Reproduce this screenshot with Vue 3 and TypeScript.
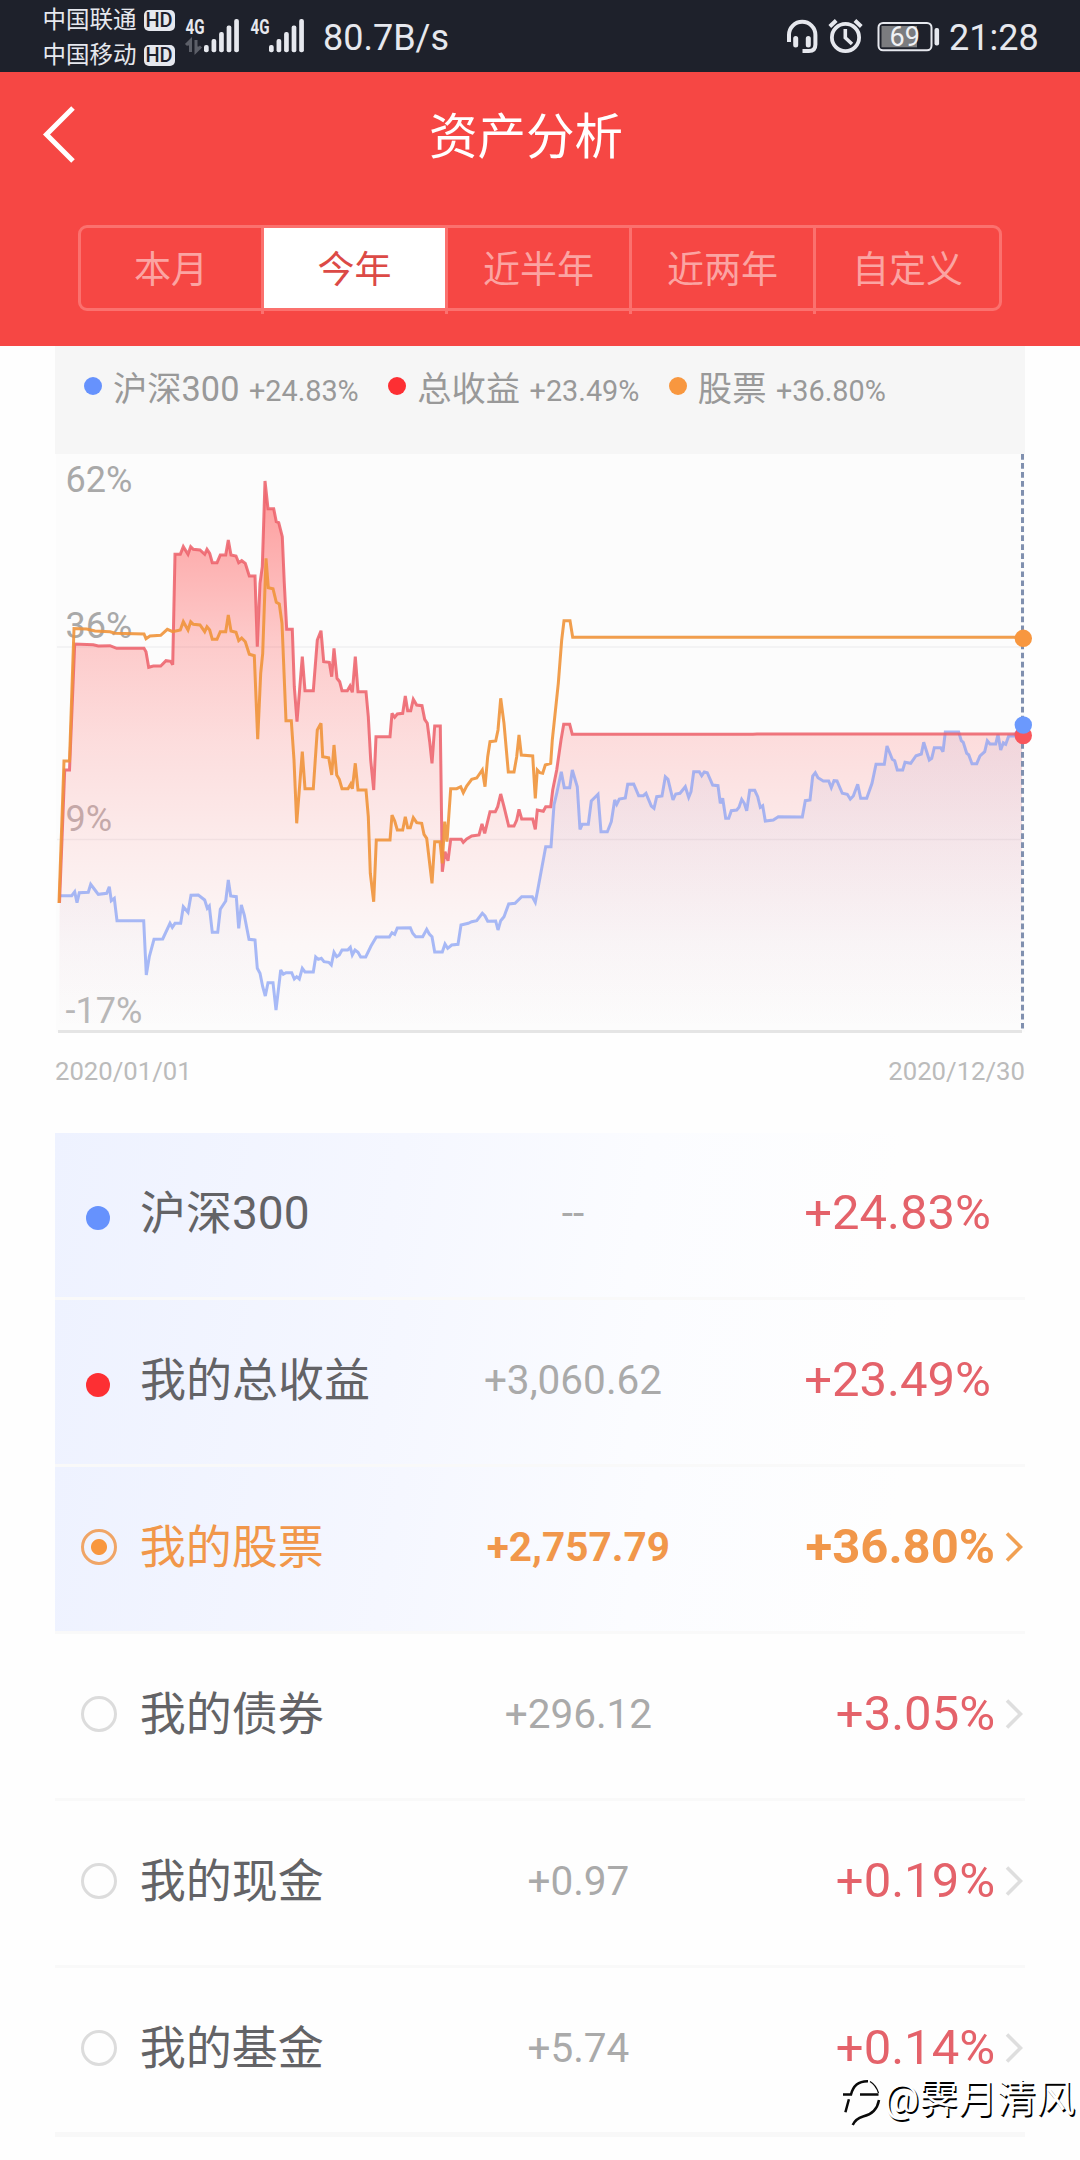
<script setup lang="ts">
interface Tab { label: string; active?: boolean }
interface LegendItem { name: string; value: string; color: string }
interface Row {
  name: string
  amount: string
  rate: string
  marker: 'dot' | 'radio'
  color?: string
  tinted?: boolean
  selected?: boolean
}

const tabs: Tab[] = [
  { label: '本月' },
  { label: '今年', active: true },
  { label: '近半年' },
  { label: '近两年' },
  { label: '自定义' },
]

const legend: LegendItem[] = [
  { name: '沪深300', value: '+24.83%', color: '#6692fd' },
  { name: '总收益', value: '+23.49%', color: '#fd2f33' },
  { name: '股票', value: '+36.80%', color: '#f8973f' },
]

const rows: Row[] = [
  { name: '沪深300', amount: '--', rate: '+24.83%', marker: 'dot', color: '#6692fd', tinted: true },
  { name: '我的总收益', amount: '+3,060.62', rate: '+23.49%', marker: 'dot', color: '#fd2f33', tinted: true },
  { name: '我的股票', amount: '+2,757.79', rate: '+36.80%', marker: 'radio', tinted: true, selected: true },
  { name: '我的债券', amount: '+296.12', rate: '+3.05%', marker: 'radio' },
  { name: '我的现金', amount: '+0.97', rate: '+0.19%', marker: 'radio' },
  { name: '我的基金', amount: '+5.74', rate: '+0.14%', marker: 'radio' },
]

const carriers = ['中国联通', '中国移动']
const bars = [45, 39, 32, 25.5, 19]

const total =
  '59.5,903 64.7,770 69.5,770 74.7,644 93.3,644.7 98.3,646 110,645.7 116.7,648.3 144,648.3 146,651.7 148.7,667.3 153.3,666 160.7,666 166,660.7 170.7,661.3 172.7,664.7 175,554.3 180.3,554.3 183.3,546.7 188,554.3 190.7,546.7 193.3,549.3 200,550 204.7,554.3 207,549.3 209.7,553.3 212.3,562.7 217,562.7 220.3,555 225.7,555 228.3,540 231,555 236,556 238.7,562.7 241.7,560.7 245.3,563.3 249.3,576 255,576 257.3,646.7 260,583.3 262.3,566.7 265,481 268,508.7 273.7,508.7 276.3,521.7 278.7,522.7 282.3,536.7 284.3,583.3 286.7,629.3 292.3,629.3 294.3,686.7 297,721.7 302.3,656.7 305,690.7 313.3,690.7 317.3,640 321,630.7 323.7,661.7 329.3,662.3 331.7,676.7 334,648.3 337,678.3 339.7,681.7 342,690.7 347.3,690.7 350,686 352.3,692.3 355.3,656.7 358,691.7 366,691.7 368.3,716.7 370.7,760 373.7,790 376,736.7 390,736.7 392,713.3 394.7,717.3 397.3,714 402.7,713.3 405.3,696 407.7,710.7 410.7,710.7 413.3,699.3 416.7,705 422,705.7 424.7,719.3 427.3,723.3 429.7,741.7 432,763.3 434.7,726 440.3,726 442.3,871.7 445,851.7 448,860.7 450.7,839.3 461.3,839.3 463.3,842.3 466.7,839 471.7,836 479,835 482,824 484.7,833.3 490,811.7 495.3,811.7 497.7,806.7 500.7,794 504,806.7 508.7,826 514,826 516.7,820 519,809.3 521.7,819 532.7,819 535.3,829.3 537.3,810 543.3,811.3 545.7,806.7 550.7,806.7 552.7,790 556.7,770 561,740 563.7,724.3 569.7,724.3 572.3,734.3 753,734.3 757,734 1022,734'

const stock =
  '59,903 64,761 69.5,761 74,628.5 86.7,629 95,631 110,631.7 115,633.3 144,634 146,638.7 150,636 160.7,635.3 167.3,629.3 172.7,631.7 180.3,630 183.3,621.7 188,630 190.7,621.7 193.3,624.3 200,625 204.7,631.7 207,626.7 209.7,630 212.3,639.3 217,639.3 220.3,631.7 225.7,631.7 228.3,615 231,631 236,632.3 238.7,640.7 241.7,638 245.3,641.7 249.3,654.3 254.3,655.7 257.7,739.3 260.7,673.3 262.7,653.3 266,558.3 268.3,587.7 273,588.7 276.3,602.3 279.3,604 282,623.3 286,720.7 291.3,720.7 294,760 296.7,823.3 302.3,751.7 305,788.7 313.3,788.7 317.3,730 321,723.3 322.7,756.7 328.7,757.7 331.7,775 334,745 336.7,775 339.3,779.3 342,788.7 348,788.7 350.7,784 352.3,788.7 355.3,763.3 358,790 366,790 368.3,816.7 370.3,873.3 373.7,901.7 376.3,840 390,840 392,815 394.7,821 397.3,830 402.7,830 405.3,816.7 407.7,827.7 410.3,827.7 413.3,817.7 416.7,822.7 421.7,823.3 424,834.3 426.7,838.3 432,883.3 434.7,841.7 440,841.7 442.3,863.3 444.7,821.7 447,841.7 450.7,788.7 456.7,788.7 460.7,786.7 463.3,792.7 466.7,786 471.7,779.3 476.7,778 482.3,770 485,786.7 487.7,756.7 490,741.7 495.7,741 498,730 500.7,698.3 504,723.3 508.3,772 514,772 516.7,756.7 519,735 521.3,755 532.7,756 535.3,798.3 537.3,770 540,772.7 542.7,773.3 545.3,765 550.7,763.3 552.3,740 558.3,683.3 561.7,640 564,620.7 570,620.7 572.7,637.3 1022,637.3'

const index =
  '60,895.7 71.7,895.7 74.7,891.7 77,902.7 79.3,892.7 88.3,892.3 90.7,884.3 95,890 98.3,894.3 106.7,893.3 109.3,886.7 111.3,900.7 114.3,898.3 117,920.7 143.7,920.7 146.3,975 149.3,956.7 154,939.3 162.7,939 170,923.3 172.3,927.3 175,923.3 180.7,923.3 183.3,906.7 188,912.3 191,895.3 198.3,895 204.7,900 207.3,908.3 209.3,906 212.3,932.3 217.7,932.3 220.3,909.3 225.7,901 228.3,880 230.7,896 236.3,896.7 238.7,928.3 241.3,905 244.3,915 249,939.3 255,940 257.3,968.3 260,973.3 262.7,986.7 265.3,996 268,982.7 273,982.7 276,1010 280.7,970 283.3,974.3 286,972.7 291.7,972.7 294.3,979 296.7,976.7 299.3,979 302.3,968.3 305,972 313.3,972 315.7,957 318.3,959.3 321.3,958.3 324,961.7 328.7,962.3 331.3,965 334,952.3 336.7,956.7 339.3,955 342,950 347.7,950 350.3,947.3 352.3,955 355,950 358,952.3 360.7,957 365.7,957 371,946 376.3,937 389.3,937 392,932.7 394.7,934.3 397.3,928 410.3,927.7 412.7,933.3 415.7,936.7 422.7,936.7 426.7,929.3 429.3,934 432,936.7 434.7,952 442.3,952 445,944 447.7,948.3 451.7,945 458,944.3 461,925 468.3,923.3 471.7,921.7 476.7,920.7 482.3,913.3 485,916 487.7,921.3 495.7,921 498,930 500.7,920.7 504,916.7 508.7,904 515,903.3 521.7,896.7 532.3,896.7 535.3,902.3 537.7,890 545.7,846.7 551,846.7 554,805 556.7,793.3 561.3,771.7 564.3,787.7 569.7,787.7 572.3,770 577.3,786.7 580,829.3 582.3,824.3 588.3,824.3 591.3,801 598,794.3 601,831.7 607.3,831.7 611.3,821.7 614.7,800 616.7,804.3 619.3,799 625.3,798 627.7,784.3 633.7,784 638.7,795.7 643.3,795.7 646,793.3 651.3,806 654,808.3 656.7,796.7 662,796 665.3,776.7 668,779.3 673,800 675.7,794 680,793.3 685.3,786.7 688.7,797.3 691,791.7 693.7,771.7 699.3,771.7 701.7,775.7 704.3,772 707.3,772.7 712.7,785 718,785.7 720.3,803.3 722.7,798.3 725.7,818.3 728.7,818.3 731.3,810.7 736.7,810 739,807.3 741.7,799.3 744.3,803.3 746.7,810.7 749.7,790.3 754.7,790.3 757.7,796.7 760.3,807.3 762.7,805.7 765.3,821 773.3,820 778.3,816.7 802.3,817 805.3,800.7 810,800 812.7,776 815.3,772.7 818,777.7 823.3,781 828.7,781 831.3,787.7 834,780.7 837,781 842.3,793.3 847.3,794.3 850.3,799 853.3,796 857.7,784.3 860.7,798.3 866.7,798.3 872,783.3 876,764.3 884.3,764.3 887,746 892.3,759.3 894.7,760.7 897.3,770 902.7,770 905,762.3 910.7,763.3 916,755.7 921.3,754 923.7,742.3 929.3,760 931.7,758.3 934.3,747.7 940.7,747.7 943,751.7 945.3,732 958.7,732 961.3,740.7 963.3,742.3 966.7,753.3 968.7,754.7 972,763.7 976.7,763.7 980,756 984.7,751.7 987.3,740.7 990,744 995.7,744 998,734.3 1000.7,750 1003.3,742.7 1005.7,744.3 1008.7,736 1014,736 1020,727 1022,725'

const axis = [
  { label: '62%', y: 492, color: '#a9a9a9' },
  { label: '36%', y: 638, color: '#a9a9a9' },
  { label: '9%', y: 830.5, color: '#bdb5b5' },
  { label: '-17%', y: 1022.5, color: '#b8b8b8' },
]

// closes a line down to the chart floor so it can be filled
const area = (pts: string): string => `${pts} 1022,1030 59,1030`
</script>

<template>
  <div class="page">
    <div class="status">
      <div class="carriers">
        <div v-for="c in carriers" :key="c" class="carrier">
          <span>{{ c }}</span><b class="hd">HD</b>
        </div>
      </div>
      <svg class="signals" width="124" height="72" viewBox="184 0 124 72">
        <g v-for="s in [0, 65]" :key="s" :transform="`translate(${s} 0)`">
          <text x="185.5" y="34" class="g4" textLength="19" lengthAdjust="spacingAndGlyphs">4G</text>
          <rect v-for="(t, i) in bars" :key="i" :x="204 + i * 7.55" :y="t" width="4.7" :height="52.3 - t" rx="2" fill="#e6e8ee" />
        </g>
        <path d="M186 45l4.500-4.500V52M196 40v11.500l5-5M190.500 44h-3M196 48h4.500" fill="none" stroke="#5c5f68" stroke-width="3" />
      </svg>
      <span class="speed">80.7B/s</span>
      <svg class="sys" width="156" height="72" viewBox="786 0 156 72" fill="none" stroke="#e6e8ee">
        <path d="M789 42V35a13.200 13.200 0 0 1 26.400 0v9.500q0 6.500-6.500 6.500H802.500" stroke-width="4" />
        <path d="M795.700 38.500v6.500M808.300 38.500v6.500" stroke-width="5" stroke-linecap="round" />
        <circle cx="845.500" cy="37.500" r="13.600" stroke-width="3.800" />
        <path d="M845.300 29v8.700l6.700 6.300" stroke-width="3.600" />
        <path d="M829.800 26.500l6.400-6M861.300 26.500l-6.400-6" stroke-width="4" />
        <rect x="878.500" y="23" width="53" height="27.300" rx="4.500" stroke-width="2" />
        <rect x="881.500" y="26" width="35.500" height="21.300" fill="#7b7c7f" stroke="none" />
        <rect x="934.500" y="28" width="4.600" height="17.500" rx="2" fill="#e6e8ee" stroke="none" />
        <text x="904.700" y="46.300" class="batt">69</text>
      </svg>
      <span class="clock">21:28</span>
    </div>

    <header class="header">
      <div class="titlebar">
        <svg class="back" width="36" height="60" viewBox="0 0 36 60" fill="none" stroke="#fff" stroke-width="5">
          <path d="M32 3L5.500 29.500L32 56" />
        </svg>
        <h1>资产分析</h1>
      </div>
      <div class="tabs">
        <div v-for="t in tabs" :key="t.label" class="tab" :class="{ active: t.active }"><span>{{ t.label }}</span></div>
      </div>
    </header>

    <section class="card">
      <div class="legend">
        <div v-for="l in legend" :key="l.name" class="leg">
          <i :style="{ background: l.color }"></i>
          <span class="leg-name">{{ l.name }}</span>
          <span class="leg-val">{{ l.value }}</span>
        </div>
      </div>
      <svg class="chart" width="970" height="582" viewBox="55 454 970 582">
        <defs>
          <linearGradient id="redFill" gradientUnits="userSpaceOnUse" x1="0" y1="480" x2="0" y2="1030">
            <stop offset="0" stop-color="#ff4d4d" stop-opacity=".56" />
            <stop offset=".15" stop-color="#ff4d4d" stop-opacity=".42" />
            <stop offset=".3" stop-color="#ff4d4d" stop-opacity=".28" />
            <stop offset=".47" stop-color="#ff4d4d" stop-opacity=".18" />
            <stop offset=".65" stop-color="#ff4d4d" stop-opacity=".1" />
            <stop offset=".84" stop-color="#ff4d4d" stop-opacity=".03" />
            <stop offset="1" stop-color="#ff4d4d" stop-opacity="0" />
          </linearGradient>
          <linearGradient id="blueFill" gradientUnits="userSpaceOnUse" x1="0" y1="730" x2="0" y2="1030">
            <stop offset="0" stop-color="#7080d0" stop-opacity=".08" />
            <stop offset=".5" stop-color="#7080d0" stop-opacity=".04" />
            <stop offset="1" stop-color="#7080d0" stop-opacity="0" />
          </linearGradient>
        </defs>
        <rect x="56" y="454" width="969" height="578" fill="#fcfcfc" />
        <path d="M57 647H1021M57 839.500H1021" stroke="#f0f0f1" stroke-width="1.500" />
        <path d="M58 1031.500H1022" stroke="#e5e5e5" stroke-width="3" />
        <text v-for="a in axis" :key="a.label" x="65.500" :y="a.y" class="axis" :fill="a.color">{{ a.label }}</text>
        <polygon :points="area(total)" fill="url(#redFill)" />
        <polygon :points="area(index)" fill="url(#blueFill)" />
        <g fill="none" stroke-width="3" stroke-linejoin="miter" stroke-miterlimit="3">
          <polyline :points="index" stroke="#7f9bf4" stroke-opacity=".68" />
          <polyline :points="total" stroke="#ec5f69" stroke-opacity=".85" />
          <polyline :points="stock" stroke="#ef933a" stroke-opacity=".9" />
        </g>
        <path d="M1022.500 454V1030" stroke="#8090af" stroke-width="3" stroke-dasharray="5.700 3.330" />
        <circle cx="1023.300" cy="638.300" r="8.700" fill="#f8973f" />
        <circle cx="1023.300" cy="735.500" r="8.700" fill="#f9565b" />
        <circle cx="1023.300" cy="725" r="8.700" fill="#6b99fd" />
      </svg>
      <div class="dates"><span>2020/01/01</span><span>2020/12/30</span></div>
    </section>

    <section class="list">
      <div v-for="r in rows" :key="r.name" class="row" :class="{ tinted: r.tinted, selected: r.selected, link: r.marker === 'radio' }">
        <div class="mark">
          <i v-if="r.marker === 'dot'" class="dot" :style="{ background: r.color }"></i>
          <i v-else class="radio"></i>
        </div>
        <div class="name">{{ r.name }}</div>
        <div class="amount">{{ r.amount }}</div>
        <div class="rate">{{ r.rate }}</div>
        <svg v-if="r.marker === 'radio'" class="chev" width="20" height="32" viewBox="0 0 20 32" fill="none" stroke-width="3.600">
          <path d="M2 2.500L15.500 16L2 29.500" />
        </svg>
      </div>
    </section>

    <div class="watermark">
      <svg width="44" height="52" viewBox="0 0 44 52" fill="none" stroke-width="2.500">
        <path v-for="k in ['#fff', '#0a0a0a']" :key="k" :stroke="k" :transform="k === '#fff' ? 'translate(-1.500 -1.500)' : ''"
          d="M3 18.500h8C13 10 19 5 28 5.200M20 18.500h18.500M8.900 23.300L5.400 36.300M39 24C37 35 30 39 23 40.500C18 42 15 44 12.700 49" />
        <path d="M30 5.500Q36 9 38.500 17" stroke="#0a0a0a" stroke-width="1.300" />
      </svg>
      <span>@霁月清风</span>
    </div>
  </div>
</template>

<style>
body { margin: 0; background: #fefefe; }
</style>

<style scoped>
.page {
  position: relative;
  width: 1080px;
  height: 2160px;
  overflow: hidden;
  background: #fefefe;
  font-family: Roboto, "Noto Sans CJK SC", sans-serif;
}
.status {
  display: flex;
  align-items: center;
  height: 72px;
  background: #1e212b;
  color: #e6e8ee;
}
.carriers { width: 184px; padding: 3px 0 0 42.500px; box-sizing: border-box; }
.carrier { display: flex; align-items: center; height: 35px; font-size: 23.5px; line-height: 35px; white-space: nowrap; }
.hd {
  display: block;
  width: 31px;
  height: 21px;
  margin-left: 7px;
  border-radius: 5px;
  background: #e6e8ee;
  color: #1e212b;
  font-size: 20px;
  line-height: 21px;
  text-align: center;
  font-weight: 500;
}
.g4 { font: 700 21px Roboto, sans-serif; fill: #e6e8ee; }
.batt { font: 400 27px Roboto, sans-serif; fill: #f0f1f4; stroke: none; text-anchor: middle; }
.speed { margin-left: 15px; font-size: 36px; line-height: 72px; margin-top: 4px; }
.sys { margin-left: auto; }
.clock { width: 89px; margin-right: 42px; margin-left: 7px; margin-top: 4px; font-size: 36px; line-height: 72px; white-space: nowrap; }

.header { height: 274px; background: #f64744; overflow: hidden; }
.titlebar { display: flex; align-items: center; height: 125px; margin-bottom: 28px; padding-left: 41px; }
.back { display: block; }
h1 { margin: 6px 0 0 352px; font-size: 48.500px; line-height: 72px; font-weight: 400; color: #fff; }
.tabs {
  display: flex;
  box-sizing: border-box;
  width: 924px;
  height: 86px;
  margin: 0 78px;
  border: 3px solid #fb716e;
  border-radius: 9px;
}
.tab {
  box-sizing: border-box;
  flex: 0 0 184px;
  height: 86px;
  border-right: 3px solid #fb716e;
  color: #fba4a2;
  font-size: 37px;
  line-height: 85px;
  text-align: center;
}
.tab:first-child { flex-basis: 183px; }
.tab:last-child { flex-basis: 183px; border-right: 0; }
.tab span { display: block; height: 80px; }
.tab.active span { background: #fff; color: #dc4a46; }

.card { width: 970px; margin-left: 55px; }
.legend { display: flex; height: 108px; padding-left: 29px; background: #f6f6f6; color: #999; box-sizing: border-box; }
.leg { display: flex; align-items: baseline; height: 80px; line-height: 80px; margin-right: 29.500px; white-space: nowrap; }
.leg i { width: 18px; height: 18px; border-radius: 50%; margin-right: 11px; align-self: center; }
.leg-name { font-size: 34.300px; line-height: 86px; }
.leg-val { margin-left: 9.500px; font-size: 28.800px; }
.chart { display: block; overflow: visible; }
.axis { font: 400 36px Roboto, sans-serif; }
.dates { display: flex; justify-content: space-between; height: 97px; padding-top: 20px; box-sizing: border-box; font-size: 25.700px; line-height: 30px; color: #bbb; }

.list { width: 970px; margin-left: 55px; }
.row {
  display: flex;
  align-items: center;
  box-sizing: border-box;
  height: 167px;
  padding-bottom: 4px;
  border-bottom: 3px solid #f9f9f9;
}
.row.tinted { background: linear-gradient(100deg, #eef2ff 0%, #f5f7ff 35%, #fbfcff 60%, #fefefe 85%); }
.row:last-child { border-bottom: 5px solid #f8f8f8; height: 169px; }
.mark { width: 85px; height: 36px; display: flex; align-items: center; padding-left: 26px; box-sizing: border-box; }
.dot { width: 24px; height: 24px; margin: 10px 0 0 5px; border-radius: 50%; }
.radio { width: 36px; height: 36px; box-sizing: border-box; border: 3px solid #dcdcdc; border-radius: 50%; }
.selected .radio {
  border-color: #f0a566;
  background: radial-gradient(circle, #f8973f 0 7.500px, transparent 8.500px);
}
.name { width: 271px; font-size: 46px; line-height: 80px; color: #636366; white-space: nowrap; }
.amount { width: 324px; font-size: 40.500px; line-height: 80px; color: #aaa; text-align: center; }
.rate { width: 256px; font-size: 49px; line-height: 80px; color: #e4626a; text-align: right; }
.link .amount { width: 338px; }
.link .rate { width: 249px; }
.chev { margin-left: 10px; stroke: #dedede; }
.selected .name { color: #f1974a; }
.selected .amount, .selected .rate { color: #f1974a; font-weight: 700; }
.selected .chev { stroke: #f1a052; }

.watermark {
  position: absolute;
  left: 840px;
  top: 2076px;
  display: flex;
  align-items: center;
  height: 52px;
  font-size: 39px;
  line-height: 46px;
  color: #fff;
  text-shadow: 1.500px 1.500px 0 #000;
  white-space: nowrap;
}
.watermark span { margin-top: -6px; }
</style>
